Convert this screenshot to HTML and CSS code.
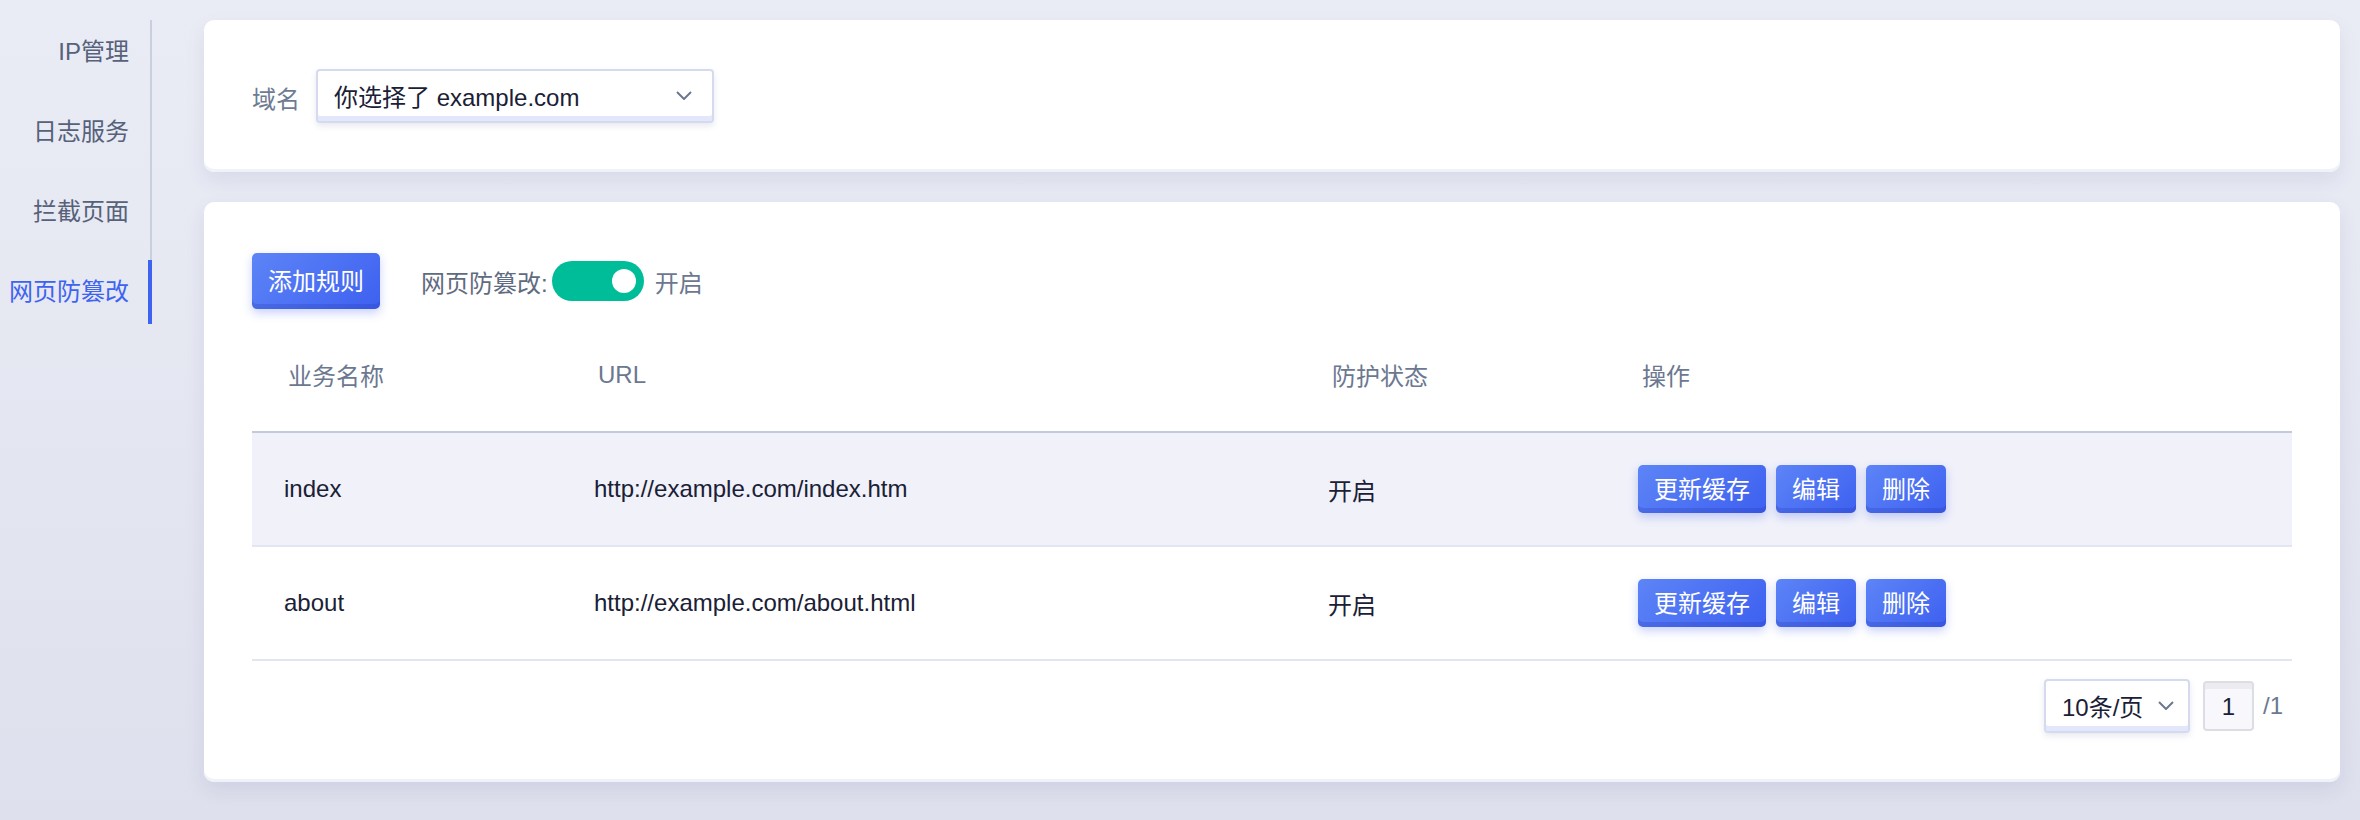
FILE: index.html
```html
<!DOCTYPE html>
<html lang="zh-CN">
<head>
<meta charset="utf-8">
<title>网页防篡改</title>
<link rel="stylesheet" href="styles.css">
</head>
<body>
<div class="layout">
  <aside class="sidebar">
    <nav class="nav">
      <a class="nav-item">IP管理</a>
      <a class="nav-item">日志服务</a>
      <a class="nav-item">拦截页面</a>
      <a class="nav-item active">网页防篡改</a>
    </nav>
  </aside>
  <main class="main">
    <section class="card card-domain">
      <span class="field-label">域名</span>
      <div class="select domain-select">
        <span class="select-text">你选择了 example.com</span>
        <svg class="chevron" width="16" height="9" viewBox="0 0 16 9"><polyline points="1,1 8,8 15,1" fill="none" stroke="#6b7890" stroke-width="2"/></svg>
      </div>
    </section>
    <section class="card card-rules">
      <div class="toolbar">
        <button class="btn btn-lg">添加规则</button>
        <span class="toggle-label">网页防篡改:</span>
        <span class="toggle"><span class="knob"></span></span>
        <span class="toggle-state">开启</span>
      </div>
      <div class="table">
        <div class="tr thead">
          <div class="th">业务名称</div>
          <div class="th">URL</div>
          <div class="th">防护状态</div>
          <div class="th">操作</div>
        </div>
        <div class="tr row hover">
          <div class="td">index</div>
          <div class="td">http://example.com/index.htm</div>
          <div class="td">开启</div>
          <div class="td actions"><button class="btn">更新缓存</button><button class="btn">编辑</button><button class="btn">删除</button></div>
        </div>
        <div class="tr row">
          <div class="td">about</div>
          <div class="td">http://example.com/about.html</div>
          <div class="td">开启</div>
          <div class="td actions"><button class="btn">更新缓存</button><button class="btn">编辑</button><button class="btn">删除</button></div>
        </div>
      </div>
      <div class="pagination">
        <div class="select size-select">
          <span class="select-text">10条/页</span>
          <svg class="chevron" width="16" height="9" viewBox="0 0 16 9"><polyline points="1,1 8,8 15,1" fill="none" stroke="#6b7890" stroke-width="2"/></svg>
        </div>
        <div class="page-input">1</div>
        <span class="page-total">/1</span>
      </div>
    </section>
  </main>
</div>
</body>
</html>
```
FILE: styles.css
```css
* { box-sizing: border-box; }
html, body { margin: 0; padding: 0; }
body {
  width: 2360px;
  height: 820px;
  overflow: hidden;
  font-family: "Liberation Sans", "Noto Sans CJK SC", sans-serif;
  font-size: 24px;
  color: #1a2035;
  background: linear-gradient(180deg, #eaecf5 0%, #e3e5f0 60%, #dee0ed 100%);
}
.layout { display: flex; height: 100%; }

.sidebar { width: 152px; padding-top: 20px; flex: none; }
.nav {
  display: flex;
  flex-direction: column;
  gap: 16px;
  border-right: 2px solid #c9cee0;
}
.nav-item {
  position: relative;
  height: 64px;
  line-height: 64px;
  padding-right: 21px;
  text-align: right;
  color: #56617a;
  white-space: nowrap;
}
.nav-item.active { color: #3d63f0; }
.nav-item.active::after {
  content: "";
  position: absolute;
  right: -2px;
  top: 0;
  width: 4px;
  height: 64px;
  background: #3d63f0;
}

.main {
  flex: 1;
  margin-left: 52px;
  padding: 20px 20px 0 0;
  display: flex;
  flex-direction: column;
  gap: 30px;
}
.card {
  background: #fff;
  border-radius: 10px;
  box-shadow: inset 0 -3px 0 #f0f2fa, 0 8px 20px rgba(50, 60, 120, 0.09);
}
.card-domain {
  height: 152px;
  padding: 0 48px;
  display: flex;
  align-items: center;
}
.field-label { color: #6e7b92; margin-right: 16px; margin-top: 2px; }

.select {
  display: flex;
  align-items: center;
  justify-content: space-between;
  height: 54px;
  background: #fff;
  border: 2px solid #d6daef;
  border-radius: 4px;
  box-shadow: inset 0 -5px 0 #e2e7fb, 0 3px 6px rgba(60, 70, 130, 0.12);
  padding-bottom: 2px;
}
.domain-select { width: 398px; padding-left: 16px; padding-right: 20px; }
.select-text { color: #1a2035; }
.chevron { flex: none; }

.card-rules { height: 580px; padding: 51px 48px 0; }
.toolbar { display: flex; align-items: center; height: 56px; }
.btn {
  font-family: inherit;
  font-size: 24px;
  color: #fff;
  border: none;
  border-radius: 5px;
  height: 48px;
  padding: 0 16px 4px;
  background: linear-gradient(135deg, #5d84f7 0%, #3e60f0 100%);
  box-shadow: inset 0 -5px 0 rgba(30, 50, 170, 0.22), 0 4px 10px rgba(60, 90, 240, 0.28);
  cursor: pointer;
}
.btn-lg { height: 56px; }
.toggle-label { color: #5f6b80; margin-left: 41px; margin-right: 4px; }
.toggle {
  position: relative;
  width: 92px;
  height: 40px;
  border-radius: 20px;
  background: #00bd9a;
  flex: none;
}
.knob {
  position: absolute;
  right: 8px;
  top: 8px;
  width: 24px;
  height: 24px;
  border-radius: 50%;
  background: #fff;
}
.toggle-state { color: #6b7890; margin-left: 11px; }

.table { margin-top: 11px; }
.tr {
  display: grid;
  grid-template-columns: 310px 734px 310px 1fr;
  align-items: center;
}
.thead { height: 113px; border-bottom: 2px solid #c5cadb; padding-bottom: 2px; }
.th { color: #6b7890; padding-left: 36px; }
.row { height: 114px; border-bottom: 2px solid #e3e6f0; }
.row.hover { background: #f0f1f9; }
.td { padding-left: 32px; white-space: nowrap; }
.actions { display: flex; gap: 10px; }

.pagination {
  margin-top: 18px;
  padding-right: 9px;
  display: flex;
  justify-content: flex-end;
  align-items: center;
}
.size-select { width: 146px; padding-left: 16px; padding-right: 14px; }
.page-input {
  margin-left: 13px;
  width: 51px;
  height: 50px;
  border: 2px solid #dcdee6;
  border-radius: 4px;
  background: #f8f8fc;
  box-shadow: inset 0 6px 0 #ebebf0;
  display: flex;
  align-items: center;
  justify-content: center;
  padding-top: 2px;
}
.page-total { color: #6b7890; margin-left: 9px; }
```
